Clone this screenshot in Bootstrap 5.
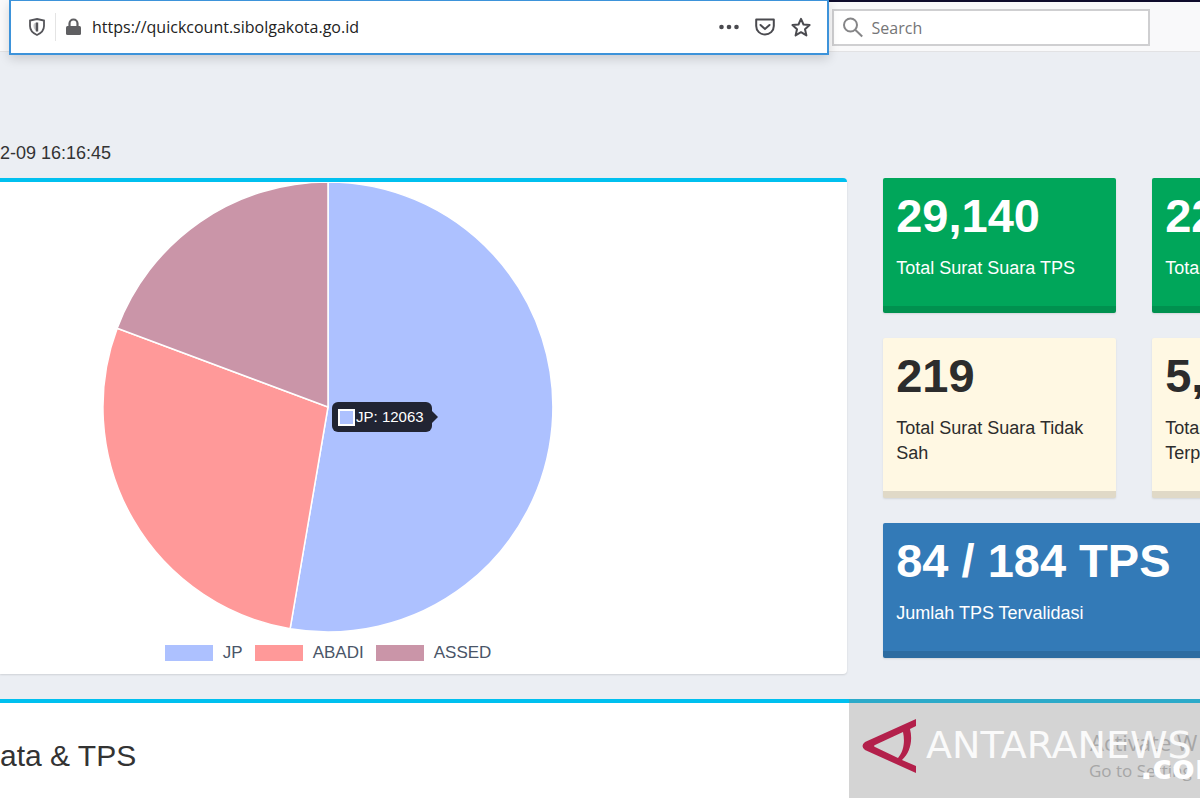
<!DOCTYPE html>
<html lang="id">
<head>
<meta charset="utf-8">
<meta name="viewport" content="width=device-width, initial-scale=1">
<title>Quick Count Kota Sibolga</title>
<link href="https://cdn.jsdelivr.net/npm/bootstrap@5.3.0/dist/css/bootstrap.min.css" rel="stylesheet">
<style>
  body { background: #ebeef3; color: #333; font-family: "Liberation Sans", Arial, sans-serif; font-size: 18px; overflow-x: hidden; }

  /* browser toolbar */
  .toolbar { height: 52px; background: #f9f9fa; border-bottom: 1px solid #e2e2e4; font-family: "Open Sans", "Noto Sans", sans-serif; }
  .url-box { flex: 0 0 68.3%; height: 55px; margin-left: 9px; padding: 0 16px; background: #fff; border: 2px solid #3d93da; border-top-width: 1px; box-shadow: 0 4px 10px rgba(0,0,0,.14); z-index: 2; }
  .url-box input { font-size: 16px; color: #222; outline: 0; }
  .tool-btn { width: 20px; height: 20px; color: #4a4a4f; }
  .divider { width: 1px; height: 28px; background: #e4e4e4; }
  .search-side { border-top: 2px solid #0f0c2c; padding-left: 3px; }
  .search-box { flex: 0 0 318px; height: 37px; margin-top: 7px; padding: 0 8px; background: #fff; border: 2px solid #cfcfd1; }
  .search-box input { font-size: 16px; outline: 0; }
  .search-box input::placeholder { color: #757577; opacity: 1; }

  /* dashboard */
  .stamp { padding-top: 88px; line-height: 26px; margin-bottom: 12px; }
  .chart-col { flex: 0 0 70.6%; }
  .panel { background: #fff; border-top: 4px solid #00c0ef; }
  .chart-panel { border-radius: 0 4px 4px 0; box-shadow: 0 1px 2px rgba(0,0,0,.12); padding: 0 191px 8px 0; }
  .pie-area { width: 450px; }
  .legend-list { gap: 12px; font-size: 17px; line-height: 26px; color: #4a5568; margin-top: 8px; }
  .swatch { width: 48px; height: 16px; margin-right: 10px; }
  .jp { background: #adc1ff; } .abadi { background: #ff9999; } .assed { background: #ca95a8; }
  .tip { left: 50%; top: 220px; margin-left: 4px; height: 30px; padding: 0 8px 0 6px; background: #212433; color: #fff; border-radius: 6px; font-size: 15px; }
  .tip::after { content: ""; position: absolute; left: 100%; top: 9px; border: 6px solid transparent; border-left-color: #212433; border-right: 0; }
  .tip-key { width: 17px; height: 17px; border: 2px solid #fff; margin-right: 1px; }

  .stats { padding-left: 36px; overflow: hidden; }
  .stat-grid { display: grid; grid-template-columns: 233px 233px; column-gap: 36px; row-gap: 25px; }
  .stat { border-radius: 2px; padding: 9px 13px 25px; border-bottom: 7px solid rgba(0,0,0,.12); box-shadow: 0 1px 2px rgba(0,0,0,.1); }
  .stat h3 { font-size: 47px; font-weight: 700; line-height: 58px; margin: 0 0 11px; white-space: nowrap; }
  .stat p { font-size: 18px; line-height: 25px; margin: 0; }
  .stat-green { background-color: #00a65a; color: #fff; }
  .stat-cream { background-color: #fff8e3; color: #2c2c2c; }
  .stat-blue { background-color: #337ab7; color: #fff; grid-column: 1 / -1; }

  .data-panel { margin-top: 25px; min-height: 101px; }
  .data-panel h2 { font-size: 30px; line-height: 36px; margin: 0; padding-top: 35px; }

  /* watermark over the lower corner */
  .watermark { right: 0; top: -4px; width: 29.25%; height: 99px; overflow: hidden; background: rgba(128,128,128,.34); white-space: nowrap; }
  .watermark > * { position: absolute; line-height: 1; }
  .wm-logo { left: 13px; top: 20px; }
  .wm-name { left: 77px; top: 24px; font: 38px "DejaVu Sans", sans-serif; color: #fafafa; }
  .wm-com { left: 291px; top: 49px; font: bold 33px "DejaVu Sans", sans-serif; color: #fff; }
  .wm-act { left: 241px; top: 28px; font: 22px "Open Sans", sans-serif; color: #a6a6a6; }
  .wm-go { left: 240px; top: 60px; font: 17px "Open Sans", sans-serif; color: #a6a6a6; }
</style>
</head>
<body>
<header class="toolbar d-flex align-items-start">
  <div class="url-box d-flex align-items-center position-relative">
    <button class="tool-btn btn p-0 border-0 d-flex" aria-label="Pelindung">
      <svg width="20" height="20" viewBox="0 0 20 20" fill="none" stroke="#55555a" stroke-width="1.800"><path d="M10 2 17 3.500V9c0 4-2.500 7-7 9-4.500-2-7-5-7-9V3.500z"/><path d="M10 5.500c-3 .500-3.500 1-3.500 3.500 0 2.500 1.500 4.500 3.500 5.500z" stroke="none" fill="#c4c4c6"/><path d="M10 5.500v9" stroke-width="2.400"/></svg>
    </button>
    <span class="divider mx-2"></span>
    <svg width="20" height="20" viewBox="0 0 20 20"><rect x="2" y="9" width="15" height="9" rx="1.500" fill="#5f5f62"/><path d="M5.500 10V6.500a4 4 0 0 1 8 0V10" fill="none" stroke="#5f5f62" stroke-width="2.200"/></svg>
    <input class="flex-grow-1 border-0 p-0 ms-2 bg-transparent" type="text" aria-label="Alamat" value="https://quickcount.sibolgakota.go.id">
    <div class="d-flex gap-3">
      <button class="tool-btn btn p-0 border-0 d-flex" aria-label="Menu halaman"><svg width="20" height="20" fill="#4a4a4f"><circle cx="2.500" cy="10" r="2.300"/><circle cx="10" cy="10" r="2.300"/><circle cx="17.500" cy="10" r="2.300"/></svg></button>
      <button class="tool-btn btn p-0 border-0 d-flex" aria-label="Simpan"><svg width="20" height="20" fill="none" stroke="#4a4a4f" stroke-width="2"><path d="M1.200 2.500h17.600V9c0 5-4 8.500-8.800 8.500S1.200 14 1.200 9z" stroke-linejoin="round"/><path d="m5.500 8 4.500 4 4.500-4" stroke-linecap="round"/></svg></button>
      <button class="tool-btn btn p-0 border-0 d-flex" aria-label="Markah"><svg width="20" height="20" fill="none" stroke="#4a4a4f" stroke-width="2" stroke-linejoin="round"><path d="m10 1.800 2.500 5.700 6.100.600-4.600 4.100 1.400 6.200L10 15.200l-5.400 3.200L6 12.200 1.400 8.100l6.100-.600z"/></svg></button>
    </div>
  </div>
  <div class="search-side d-flex flex-grow-1">
    <label class="search-box d-flex align-items-center">
      <svg width="22" height="22" fill="none" stroke="#858587" stroke-width="2"><circle cx="8.500" cy="8" r="6.500"/><path d="m13.200 12.800 7 6.700"/></svg>
      <input class="flex-grow-1 border-0 p-0 ms-2 bg-transparent" type="search" placeholder="Search" aria-label="Search">
    </label>
  </div>
</header>

<main>
  <p class="stamp">2-09 16:16:45</p>
  <div class="d-flex">
    <section class="chart-col">
      <div class="panel chart-panel">
        <div class="pie-area position-relative mx-auto">
          <svg class="d-block w-100" viewBox="0 0 450 450" role="img" aria-label="Perolehan suara" stroke="#fff" stroke-width="1.500">
            <path fill="#adc1ff" d="M225 225V0A225 225 0 1 1 187.100 446.800z"/>
            <path fill="#ff9999" d="M225 225 187.100 446.800A225 225 0 0 1 14.200 146.200z"/>
            <path fill="#ca95a8" d="M225 225 14.200 146.200A225 225 0 0 1 225 0z"/>
          </svg>
          <div class="tip position-absolute d-flex align-items-center text-nowrap"><span class="tip-key jp"></span>JP: 12063</div>
        </div>
        <ul class="legend-list list-unstyled d-flex justify-content-center mb-0">
          <li class="d-flex align-items-center"><span class="swatch jp"></span>JP</li>
          <li class="d-flex align-items-center"><span class="swatch abadi"></span>ABADI</li>
          <li class="d-flex align-items-center"><span class="swatch assed"></span>ASSED</li>
        </ul>
      </div>
    </section>
    <section class="stats flex-grow-1">
      <div class="stat-grid">
        <div class="stat stat-green"><h3>29,140</h3><p>Total Surat Suara TPS</p></div>
        <div class="stat stat-green"><h3>22</h3><p>Total</p></div>
        <div class="stat stat-cream"><h3>219</h3><p>Total Surat Suara Tidak Sah</p></div>
        <div class="stat stat-cream"><h3>5,</h3><p>Total<br>Terp</p></div>
        <div class="stat stat-blue"><h3>84 / 184 TPS</h3><p>Jumlah TPS Tervalidasi</p></div>
      </div>
    </section>
  </div>
  <section class="panel data-panel position-relative">
    <h2>ata &amp; TPS</h2>
    <div class="watermark position-absolute">
      <span class="wm-act">Activate W</span>
      <span class="wm-go">Go to Setting</span>
      <svg class="wm-logo" width="55" height="54" viewBox="0 0 55 54"><path fill="#b3204b" fill-rule="evenodd" d="M54 0v7L48 10C51 22 48 34 40 41L54 47v7L3 31Q-2 27 3 23zM41 13 13 26Q11 27 13 28L36 39C42 32 43 22 41 13z"/></svg>
      <span class="wm-name">ANTARANEWS</span>
      <span class="wm-com">.com</span>
    </div>
  </section>
</main>
<script src="https://cdn.jsdelivr.net/npm/bootstrap@5.3.0/dist/js/bootstrap.bundle.min.js"></script>
</body>
</html>
